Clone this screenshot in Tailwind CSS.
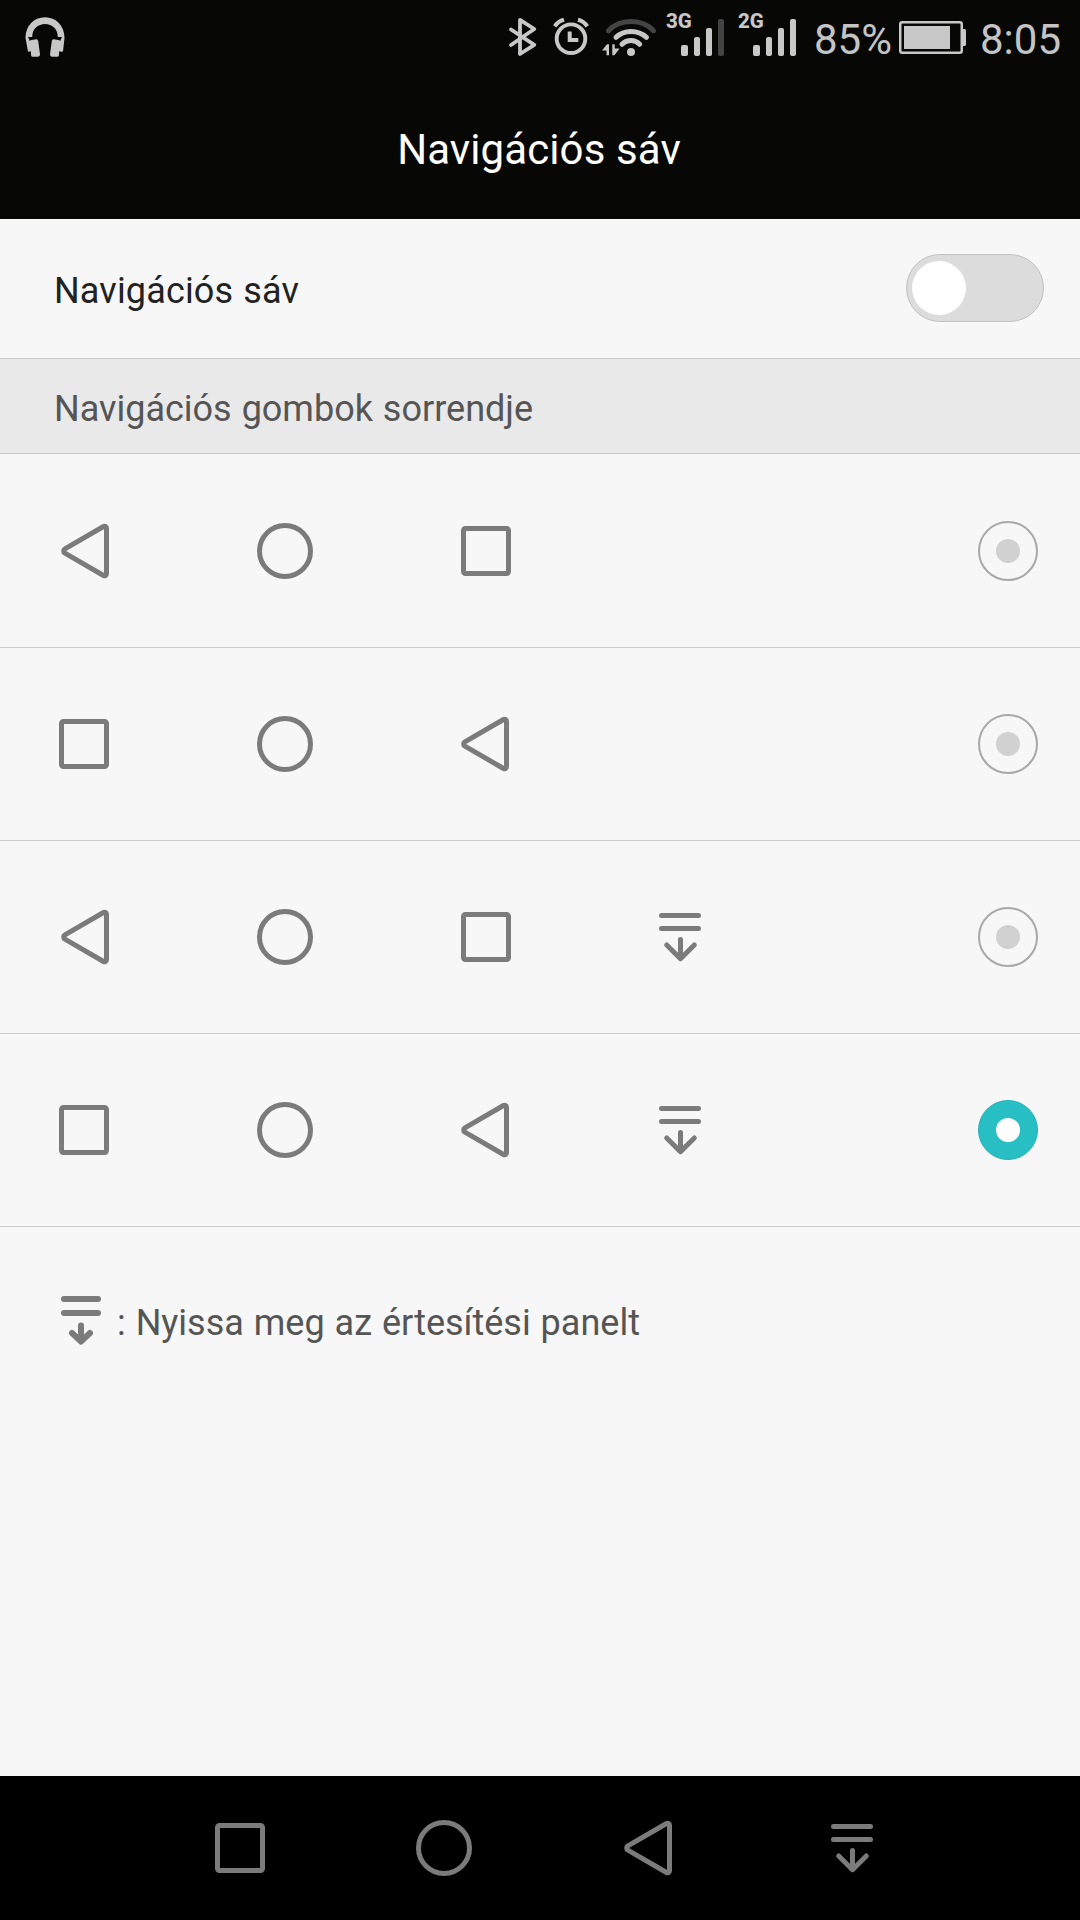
<!DOCTYPE html>
<html lang="hu">
<head>
<meta charset="utf-8">
<title>Navigációs sáv</title>
<script src="https://cdn.jsdelivr.net/npm/@tailwindcss/browser@4"></script>
</head>
<body class="w-[1080px] h-[1920px] overflow-hidden bg-[#f7f7f7] font-['Roboto',sans-serif]">
<svg width="0" height="0" class="hidden">
  <defs>
    <g id="back" fill="none" stroke="#7b7b7b" stroke-width="5" stroke-linejoin="round"><path d="M51.500 6.200 a2 2 0 0 0 -3 -1.700 L9.900 26.900 a2.400 2.400 0 0 0 0 4.200 L48.500 53.500 a2 2 0 0 0 3 -1.700Z"/></g>
    <g id="home" fill="none" stroke="#7b7b7b" stroke-width="5"><circle cx="29" cy="29" r="25.500"/></g>
    <g id="recent" fill="none" stroke="#7b7b7b" stroke-width="5"><rect x="6.500" y="6.500" width="45" height="45" rx="2"/></g>
    <g id="panel" fill="none" stroke="#7b7b7b" stroke-width="5" stroke-linecap="round" stroke-linejoin="round"><path d="M10.500 7.500H47.500M10.500 20.500H47.500M29.500 31.500V50.500M15.700 37L29.500 50.700L43.300 37"/></g>
  </defs>
</svg>
<div class="flex flex-col h-full">
  <header class="h-[219px] bg-[#070805] shrink-0">
    <div class="h-[76px] flex items-start text-[#c4c4c4] whitespace-nowrap">
      <svg class="ml-5 w-[50px] h-[76px]" viewBox="20 0 50 76" fill="#c8c8c8"><path d="M25.500 38C25.500 25.500 34 17.300 45 17.300S64.500 25.500 64.500 38L63 51.500H61L60.500 40L62 37H57.800C57.800 29 52 24 45 24S32.200 29 32.200 37H28L29.500 40L29 51.500H28Z"/><path d="M28 41.500L31.500 40L36.500 39.300Q38 39.300 38.200 41L40 54.500Q40 56.500 38 56.700H32.500Q31 56.700 31 55V51.500H28ZM62 41.500L58.500 40L53.500 39.300Q52 39.300 51.800 41L50 54.500Q50 56.500 52 56.700H57.500Q59 56.700 59 55V51.500H62Z"/></svg>
      <svg class="ml-[430px] w-[300px] h-[76px]" viewBox="500 0 300 76" fill="none" stroke="#c8c8c8" stroke-linecap="round" stroke-linejoin="round">
        <path stroke-width="3.800" d="M511 29.500L534.300 44.800L520 54V19.800L534.300 29L511 45"/>
        <circle cx="571" cy="38.700" r="14.300" stroke-width="3.900"/>
        <path stroke-width="4" stroke-linecap="butt" stroke-linejoin="miter" d="M569.700 31.500V40H578.300"/>
        <path stroke-width="4" stroke-linecap="butt" d="M554.800 26.300Q558 21.300 564 19.800M578 19.800Q584 21.300 587.200 26.300"/>
        <path stroke="#444" stroke-width="5" d="M608.500 30.800C620 18.500 642 18.500 653.500 30.800"/>
        <path stroke-width="5" d="M616 37.300C624 29.500 638 29.500 646.500 37.300M622 44.300C627 39.300 635 39.300 639.700 44.300"/>
        <g stroke="none" fill="#c8c8c8">
          <circle cx="631" cy="52" r="4"/>
          <path d="M602 50.500L607 44.300H609V55.300H606.500V50.500ZM612.300 44.300H614.700V48.500H619.500L614.500 55.300H612.300Z"/>
          <rect x="681" y="45" width="7" height="11" rx="2"/><rect x="694" y="37" width="6" height="19" rx="2"/><rect x="706" y="28" width="6" height="28" rx="2"/><rect x="718" y="19" width="6" height="37" rx="2" fill="#444"/>
          <rect x="753" y="45" width="7" height="11" rx="2"/><rect x="766" y="37" width="6" height="19" rx="2"/><rect x="778" y="28" width="6" height="28" rx="2"/><rect x="790" y="19" width="6" height="37" rx="2"/>
          <text x="666" y="28" font-size="20.500" font-weight="800">3G</text>
          <text x="738" y="28" font-size="20.500" font-weight="800">2G</text>
        </g>
      </svg>
      <span class="ml-[14px] w-[81px] mt-[15px] text-[42px] leading-[50px]">85%</span>
      <svg class="ml-1 w-[70px] h-[76px]" viewBox="899 0 70 76" fill="#c8c8c8"><rect x="900.250" y="22.250" width="61.500" height="30.500" rx="2" fill="none" stroke="#c8c8c8" stroke-width="2.500"/><rect x="904" y="26" width="46" height="23"/><path d="M963 29h1.500q1.500 0 1.500 1.500v14q0 1.500-1.500 1.500H963z"/></svg>
      <span class="ml-[11px] mt-[15px] text-[42px] leading-[50px]">8:05</span>
    </div>
    <h1 class="mt-[49px] pr-0.5 text-center text-[42px] leading-[50px] tracking-[0.1px] text-white whitespace-nowrap">Navigációs sáv</h1>
  </header>

  <main class="h-[1557px] shrink-0">
    <div class="h-[140px] flex items-center justify-between pl-[54px] pr-9 pb-px border-b border-[#cbcbcb]">
      <span class="pt-1.5 text-4xl tracking-[0.15px] [word-spacing:1px] text-[#222]">Navigációs sáv</span>
      <div class="w-[138px] h-[68px] rounded-full bg-[#dcdcdc] border border-[#c2c2c2] flex items-center pl-[5px]"><div class="size-[54px] rounded-full bg-white"></div></div>
    </div>
    <div class="h-[95px] flex items-center pl-[54px] pt-1.5 bg-[#e9e9e9] border-b border-[#cbcbcb] text-4xl [word-spacing:1px] text-[#555]">Navigációs gombok sorrendje</div>

    <div class="h-[194px] flex items-center pl-[55px] pr-[42px] border-b border-[#cbcbcb]">
      <svg class="size-[58px]"><use href="#back"/></svg>
      <svg class="size-[58px] ml-[143px]"><use href="#home"/></svg>
      <svg class="size-[58px] ml-[143px]"><use href="#recent"/></svg>
      <div class="ml-auto size-[60px] rounded-full border-2 border-[#a8a8a8] flex items-center justify-center"><div class="size-6 rounded-full bg-[#d1d1d1]"></div></div>
    </div>
    <div class="h-[193px] flex items-center pl-[55px] pr-[42px] border-b border-[#cbcbcb]">
      <svg class="size-[58px]"><use href="#recent"/></svg>
      <svg class="size-[58px] ml-[143px]"><use href="#home"/></svg>
      <svg class="size-[58px] ml-[141px]"><use href="#back"/></svg>
      <div class="ml-auto size-[60px] rounded-full border-2 border-[#a8a8a8] flex items-center justify-center"><div class="size-6 rounded-full bg-[#d1d1d1]"></div></div>
    </div>
    <div class="h-[193px] flex items-center pl-[55px] pr-[42px] border-b border-[#cbcbcb]">
      <svg class="size-[58px]"><use href="#back"/></svg>
      <svg class="size-[58px] ml-[143px]"><use href="#home"/></svg>
      <svg class="size-[58px] ml-[143px]"><use href="#recent"/></svg>
      <svg class="size-[58px] ml-[136px]"><use href="#panel"/></svg>
      <div class="ml-auto size-[60px] rounded-full border-2 border-[#a8a8a8] flex items-center justify-center"><div class="size-6 rounded-full bg-[#d1d1d1]"></div></div>
    </div>
    <div class="h-[193px] flex items-center pl-[55px] pr-[42px] border-b border-[#cbcbcb]">
      <svg class="size-[58px]"><use href="#recent"/></svg>
      <svg class="size-[58px] ml-[143px]"><use href="#home"/></svg>
      <svg class="size-[58px] ml-[141px]"><use href="#back"/></svg>
      <svg class="size-[58px] ml-[138px]"><use href="#panel"/></svg>
      <div class="ml-auto size-[60px] rounded-full bg-[#27bfc3] border border-[#25b2b6] flex items-center justify-center"><div class="size-6 rounded-full bg-white"></div></div>
    </div>
    <div class="flex items-start pt-[69px] pl-[61px] text-4xl text-[#555]">
      <svg class="w-10 h-[50px] shrink-0" viewBox="0 0 40 50" fill="none" stroke="#7b7b7b" stroke-width="6" stroke-linecap="round" stroke-linejoin="round"><path d="M3 3H37M3 17H37M20 29.500V45M11 37L20 45.500L29 37"/></svg>
      <span class="ml-4 mt-[7px] [word-spacing:1px] whitespace-nowrap">: Nyissa meg az értesítési panelt</span>
    </div>
  </main>

  <nav class="h-[144px] bg-black shrink-0 flex items-center pl-[211px]">
    <svg class="size-[58px]"><use href="#recent"/></svg>
    <svg class="size-[58px] ml-[146px]"><use href="#home"/></svg>
    <svg class="size-[58px] ml-[145px]"><use href="#back"/></svg>
    <svg class="size-[58px] ml-[147px]"><use href="#panel"/></svg>
  </nav>
</div>
</body>
</html>
